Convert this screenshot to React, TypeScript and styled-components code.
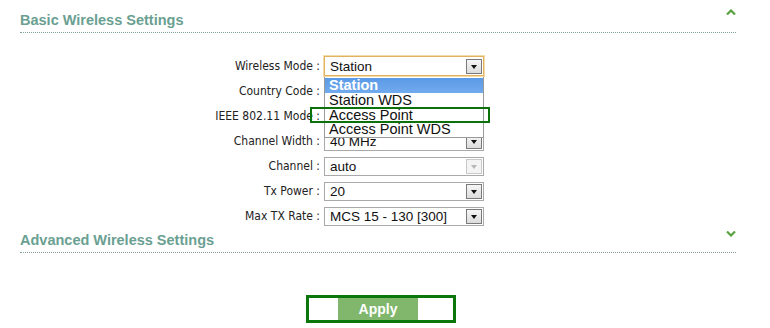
import React from "react";
import styled, { createGlobalStyle } from "styled-components";

const Global = createGlobalStyle`
  html, body { margin: 0; padding: 0; background: #ffffff; }
  body { width: 770px; height: 328px; overflow: hidden; font-family: "Liberation Sans", Arial, sans-serif; }
`;

const Page = styled.div`
  padding: 0 34px 0 20px;
  width: 716px;
  position: relative;
`;

const SectionHeader = styled.div<{ $top: number }>`
  display: flex;
  align-items: flex-end;
  justify-content: space-between;
  padding-top: ${(p) => p.$top}px;
  padding-bottom: 3px;
  border-bottom: 1px dotted #7f9f9b;
`;

const Title = styled.h2`
  margin: 0;
  font-family: "Liberation Sans", Arial, sans-serif;
  font-weight: bold;
  font-size: 14.5px;
  line-height: 17px;
  color: #6a9f92;
`;

const Chevron = styled.svg<{ $shift: number }>`
  width: 10px;
  height: 6px;
  position: relative;
  top: ${(p) => p.$shift}px;
`;

const Form = styled.div`
  position: relative;
  padding-top: 21px;
  display: grid;
  grid-template-columns: 300px 160px;
  column-gap: 4px;
  grid-auto-rows: 25px;
  align-items: start;
`;

const Label = styled.div`
  font-family: "DejaVu Sans Condensed", "DejaVu Sans", Verdana, sans-serif;
  font-stretch: condensed;
  font-size: 12px;
  color: #222;
  text-align: right;
  line-height: 19px;
  padding-top: 3px;
  white-space: nowrap;
`;

const SelectBox = styled.div<{ $focused?: boolean }>`
  box-sizing: border-box;
  height: ${(p) => (p.$focused ? 20 : 19)}px;
  margin-top: ${(p) => (p.$focused ? 2 : 3)}px;
  border: 1px solid ${(p) => (p.$focused ? "#e2b25e" : "#a9a9a9")};
  box-shadow: ${(p) => (p.$focused ? "0 0 0 1px #f3dca8" : "none")};
  background: #fff;
  display: flex;
  align-items: center;
  justify-content: space-between;
  padding: 0 1px 0 5px;
  font-family: "Liberation Sans", Arial, sans-serif;
  font-size: 13.5px;
  color: #111;
`;

const Arrow = styled.span<{ $disabled?: boolean }>`
  box-sizing: border-box;
  width: 16px;
  height: 15px;
  border: 1px solid ${(p) => (p.$disabled ? "#c8c8c8" : "#7a7a7a")};
  background: ${(p) => (p.$disabled ? "#f4f4f4" : "linear-gradient(#f6f6f6, #dcdcdc)")};
  display: flex;
  align-items: center;
  justify-content: center;
  &::after {
    content: "";
    border-left: 3.5px solid transparent;
    border-right: 3.5px solid transparent;
    border-top: 4px solid ${(p) => (p.$disabled ? "#b8b8b8" : "#111")};
    margin-top: 1px;
  }
`;

const DropList = styled.div`
  position: absolute;
  left: 304px;
  top: 44px;
  width: 160px;
  box-sizing: border-box;
  border: 1px solid #9a9a9a;
  border-top: none;
  background: #fff;
  padding: 1px 0 0;
  z-index: 2;
`;

const Option = styled.div<{ $selected?: boolean }>`
  height: 14.75px;
  line-height: 15px;
  padding-left: 4px;
  font-family: "Liberation Sans", Arial, sans-serif;
  font-size: 14.5px;
  font-weight: ${(p) => (p.$selected ? "bold" : "normal")};
  color: ${(p) => (p.$selected ? "#fff" : "#111")};
  background: ${(p) => (p.$selected ? "linear-gradient(#5a9ae6, #72aaee)" : "transparent")};
  white-space: nowrap;
  overflow: hidden;
`;

const Annotation = styled.div`
  position: absolute;
  left: 290px;
  top: 74px;
  width: 180px;
  height: 16px;
  box-sizing: border-box;
  border: 2px solid #0b720b;
  z-index: 3;
`;

const ApplyRow = styled.div`
  display: flex;
  justify-content: center;
  padding-top: 42px;
`;

const ApplyFrame = styled.div`
  box-sizing: border-box;
  width: 150px;
  height: 28px;
  border: 3px solid #0b760b;
  display: flex;
  align-items: center;
  padding-left: 29px;
  margin-left: 6px;
`;

const ApplyButton = styled.button`
  width: 80px;
  height: 22px;
  border: none;
  padding: 0;
  background: #80b76c;
  color: #fff;
  font-family: "Liberation Sans", Arial, sans-serif;
  font-weight: bold;
  font-size: 14px;
`;

type Row = { label: string; value: string; disabled?: boolean; focused?: boolean };

const rows: Row[] = [
  { label: "Wireless Mode :", value: "Station", focused: true },
  { label: "Country Code :", value: "" },
  { label: "IEEE 802.11 Mode :", value: "" },
  { label: "Channel Width :", value: "40 MHz" },
  { label: "Channel :", value: "auto", disabled: true },
  { label: "Tx Power :", value: "20" },
  { label: "Max TX Rate :", value: "MCS 15 - 130 [300]" },
];

const ChevronIcon = ({ up, shift }: { up: boolean; shift: number }) => (
  <Chevron $shift={shift} viewBox="0 0 10 6">
    <path
      d={up ? "M1 5.5 L5 1.5 L9 5.5" : "M1 0.5 L5 4.5 L9 0.5"}
      fill="none"
      stroke="#5aa23f"
      strokeWidth="2.2"
    />
  </Chevron>
);

export default function App() {
  return (
    <Page>
      <Global />
      <SectionHeader $top={12}>
        <Title>Basic Wireless Settings</Title>
        <ChevronIcon up shift={-14} />
      </SectionHeader>
      <Form>
        {rows.map((r) => (
          <React.Fragment key={r.label}>
            <Label>{r.label}</Label>
            <SelectBox $focused={r.focused}>
              <span>{r.value}</span>
              <Arrow $disabled={r.disabled} />
            </SelectBox>
          </React.Fragment>
        ))}
        <DropList>
          <Option $selected>Station</Option>
          <Option>Station WDS</Option>
          <Option>Access Point</Option>
          <Option>Access Point WDS</Option>
        </DropList>
        <Annotation />
      </Form>
      <SectionHeader $top={3}>
        <Title>Advanced Wireless Settings</Title>
        <ChevronIcon up={false} shift={-12} />
      </SectionHeader>
      <ApplyRow>
        <ApplyFrame>
          <ApplyButton>Apply</ApplyButton>
        </ApplyFrame>
      </ApplyRow>
    </Page>
  );
}
